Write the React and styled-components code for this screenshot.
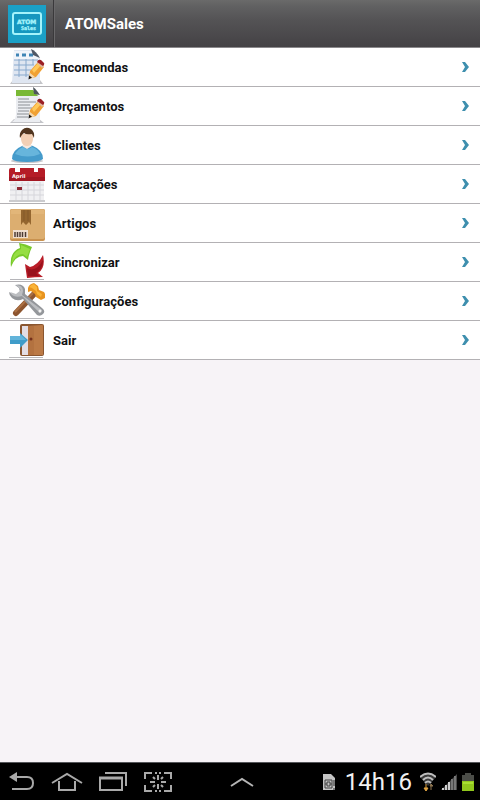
import React from 'react';
import styled, { createGlobalStyle } from 'styled-components';

const GlobalStyle = createGlobalStyle`
  * {
    box-sizing:border-box;
  }

  body {
    margin:0;
    background-color:#f7f3f7;
    font-family:Roboto, "Liberation Sans", sans-serif;
  }
`;

const Screen = styled.div`
  display:flex;
  flex-direction:column;
  min-height:100vh;
`;

const Header = styled.header`
  display:flex;
  align-items:stretch;
  height:48px;
  background:linear-gradient(#6a6a6a 0, #616162 6px, #545355 20px, #484649 40px, #444245 100%);
  border-bottom:1px solid #8b898c;

  h1 {
    margin:0;
    padding-left:11px;
    font-size:15px;
    line-height:48px;
    color:white;
  }
`;

const LogoButton = styled.button`
  display:flex;
  align-items:center;
  padding:0 7px 0 8px;
  border:0;
  border-right:1px solid #3a393b;
  box-shadow:1px 0 0 #69686a;
  background:none;
`;

const Menu = styled.ul`
  list-style-type:none;
  margin:0;
  padding:0;
  background-color:white;
`;

const MenuLink = styled.a`
  display:flex;
  align-items:center;
  height:39px;
  padding:0 10px 0 9px;
  border-bottom:1px solid #b3b1b4;
  color:#101012;
  font-size:13px;
  font-weight:bold;
  text-decoration:none;

  span {
    flex:1;
    padding-left:8px;
  }
`;

const NavBar = styled.footer`
  display:grid;
  grid-template-columns:1fr auto 1fr;
  align-items:center;
  height:38px;
  margin-top:auto;
  padding:0 6px 0 9px;
  border-top:1px solid #55565a;
  background-color:black;
`;

const NavKeys = styled.nav`
  display:flex;
  align-items:center;
  gap:16px;
`;

const NavButton = styled.button`
  display:flex;
  padding:0;
  border:0;
  background:none;
`;

const Status = styled.div`
  display:flex;
  align-items:center;
  justify-content:flex-end;
  gap:5px;

  time {
    padding:0 3px 0 4px;
    font-size:24px;
    line-height:36px;
    color:#f2f2f2;
  }
`;

const Logo = () => (
  <svg width="38" height="38" viewBox="0 0 38 38">
    <rect width="38" height="38" fill="#1ba0c6" />
    <rect x="5" y="8" width="28" height="21" rx="2" fill="#1697bf" stroke="#a4f3fb" strokeWidth="2" />
    <text x="9" y="19" fontFamily="DejaVu Sans" fontWeight="bold" fontSize="6" fill="#a4f3fb" stroke="#a4f3fb" strokeWidth="0.4">ATOM</text>
    <text x="13" y="25" fontFamily="DejaVu Sans Mono" fontWeight="bold" fontSize="5" fill="#a4f3fb" stroke="#a4f3fb" strokeWidth="0.3">Sales</text>
  </svg>
);

const Pencil = () => (
  <g>
    <path d="M20 31l1-8 8-9 6 5-8 10z" fill="#f0a032" />
    <path d="M23 22l7-8 3 2-8 9z" fill="#ffc95a" />
    <path d="M20 31l1-6 5 4z" fill="#f4d9b2" />
    <path d="M19.500 31.500l.5-4 3 2z" fill="#171514" />
    <path d="M28 15l2-2 5 5-2 2z" fill="#e0b9a0" />
    <path d="M28 14q1-3 4-2l2 2q2 1 1 3l-1 1z" fill="#9c2026" />
  </g>
);

const OrdersIcon = () => (
  <>
    <path d="M1 36h33l-3-4H4z" fill="#c3c4c8" />
    <path d="M5 2h19l7 9v24H3z" fill="#dfe6f1" />
    <path d="M5 3h17l8 8v1H5z" fill="#f1f4fa" />
    <path d="M7 7h3M13 7h4M20 7h4" stroke="#3f84b5" strokeWidth="3" />
    <path d="M5 12h24M5 17h20M5 22h17M5 27h15M10 11v18M17 11v18M24 11v6" fill="none" stroke="#88a9cd" strokeWidth="1" />
    <path d="M22 1q5 2 9 9l-7-3z" fill="#505866" />
    <Pencil />
  </>
);

const QuotesIcon = () => (
  <>
    <path d="M1 36h34l-5-4H5z" fill="#c3c4c8" />
    <path d="M7 3h18l6 7v25H3q4-3 4-8z" fill="#ebedf1" />
    <path d="M7 3h17l5 6H7z" fill="#79b835" />
    <path d="M9 12h11M9 15h18M9 18h12M9 21h14M9 24h11M8 27h12M8 30h11" stroke="#8b8f94" strokeWidth="1" />
    <path d="M24 0q3 2 7 8l-6-1z" fill="#4d555c" />
    <Pencil />
  </>
);

const ClientsIcon = () => (
  <>
    <ellipse cx="18" cy="35" rx="16" ry="2" fill="#c8c8cb" />
    <path d="M3 33q0-9 10-13l5-2 6 2q10 4 10 13-3 3-16 3T3 33z" fill="#459bcb" />
    <path d="M6 28q3-5 8-7 4 4 9 0 6 2 8 7-12 5-25 0z" fill="#67b5dc" />
    <path d="M13 20l2-3h6l2 3-5 3z" fill="#f7e9df" />
    <path d="M12 8h12q1 12-6 12T12 8z" fill="#f3d0b5" />
    <path d="M11 12q-1-5 2-8 4-4 9-1 4 3 3 9l-2-4q-6 1-8-1-2 1-4 5z" fill="#51351f" />
  </>
);

const CalendarIcon = () => (
  <>
    <path d="M0 35h36v2H0z" fill="#cbcbce" />
    <path d="M1 14h34v21H1z" fill="#f0f0f2" />
    <path d="M1 20h34M1 25h34M1 30h34M7 17v18M13 17v18M19 17v18M25 17v18M31 17v18" stroke="#d6d6db" strokeWidth="1" />
    <path d="M0 5q0-2 2-2h4v4h5V3h14v4h4V3h5q2 0 2 2v11H0z" fill="#b51c27" />
    <path d="M0 12h36v4H0z" fill="#a31722" />
    <rect x="8" y="22" width="5" height="3" fill="#8f2a35" />
    <text x="3" y="13" fontFamily="DejaVu Sans" fontWeight="bold" fontSize="5" fill="white">April</text>
  </>
);

const BoxIcon = () => (
  <>
    <rect x="1" y="5" width="35" height="32" rx="2" fill="#c9924f" />
    <rect x="1" y="5" width="35" height="30" rx="2" fill="#dcae70" />
    <path d="M2 6h33v4H2z" fill="#e2b679" />
    <path d="M12 6h10v15l-2-3-3 3-3-3-2 3z" fill="#94662f" />
    <path d="M15 6v11M19 6v11" stroke="#83582a" strokeWidth="1" />
    <rect x="4" y="26" width="15" height="8" fill="#f0dfd0" />
    <path d="M6 28v5M8.500 28v5M11 28v5M13.500 28v5M16.500 28v5" stroke="#4c3b35" strokeWidth="1.500" />
  </>
);

const SyncIcon = () => (
  <>
    <path d="M1 36h34v1H1z" fill="#b5b5b9" />
    <path d="M2 24Q0 9 11 5L10 0q7 1 13 4-3 6-4 13l-5-4Q6 13 2 24z" fill="#78c92b" />
    <path d="M3 20Q3 9 12 6V2l9 4-3 8-4-3Q7 11 3 20z" fill="#96de42" />
    <path d="M34 12q3 13-5 18l5 4q-8 0-16 1-1-7-2-14l5 3q8-2 13-12z" fill="#b91d28" />
    <path d="M34 17q0 9-7 13l3 3-11 0-1-8q9 5 16-8z" fill="#99121d" />
  </>
);

const ToolsIcon = () => (
  <>
    <path d="M1 36h34v1H1z" fill="#b9b9bc" />
    <path d="M7 31L26 11" stroke="#8d552f" strokeWidth="6" strokeLinecap="round" />
    <path d="M6 30L24 11" stroke="#ab7043" strokeWidth="2" />
    <path d="M19 6q1-4 6-5l4 3 1 4 5 2q2 3 1 6l-4 2-5-3-1-3-4-3-3 1z" fill="#e8941f" />
    <path d="M20 5q3-3 5-3l3 3 0 4 5 3-1 3-4-3-1-3-4-3z" fill="#fbb437" />
    <path d="M6 3q8-2 10 4l0 5 17 14q4 3 1 6-3 3-6 1L14 17q-6 3-11-1-3-3-3-6l6 4 5-4-1-4z" fill="#94979b" />
    <path d="M7 3q7 0 7 6l-1 4 20 15-2 3-18-17q-6 2-10-1l-2-3 6 2 5-4z" fill="#bcbec1" />
    <circle cx="31" cy="29" r="1.500" fill="#f4f4f4" />
  </>
);

const ExitIcon = () => (
  <>
    <path d="M0 36h34v1H0z" fill="#b9b9bc" />
    <rect x="11" y="3" width="24" height="32" rx="2" fill="#8a5630" />
    <path d="M13 5h7v29h-7z" fill="#e3dde3" />
    <path d="M19 5l14-1q1 0 1 1v29H19z" fill="#bb7a46" />
    <path d="M19 5h6v29h-6z" fill="#b37240" />
    <circle cx="22" cy="18" r="1.500" fill="#74301c" />
    <path d="M1 15h10v-3l8 7-8 8v-4H1z" fill="#3f9cc9" />
    <path d="M1 15h10v-2l6 6H1z" fill="#62b4da" />
  </>
);

const Chevron = () => (
  <svg width="9" height="12" viewBox="0 0 9 12">
    <path d="M1 1h3l4 5-4 5H1l3-5z" fill="#3e8fae" />
  </svg>
);

const BackIcon = () => (
  <svg width="26" height="20" viewBox="0 0 26 20">
    <path d="M6 5h12q6 0 6 6t-6 6H3" fill="none" stroke="#a9a9a9" strokeWidth="2" />
    <path d="M0 5l8-5v10z" fill="#a9a9a9" />
  </svg>
);

const HomeIcon = () => (
  <svg width="32" height="20" viewBox="0 0 32 20">
    <path d="M1 11L16 2l15 9M8 9v9h16V9" fill="none" stroke="#a9a9a9" strokeWidth="2" />
  </svg>
);

const RecentsIcon = () => (
  <svg width="29" height="20" viewBox="0 0 29 20">
    <path d="M6 1h21v13" fill="none" stroke="#a9a9a9" strokeWidth="2" />
    <path d="M1 6h22v12H1z" fill="none" stroke="#a9a9a9" strokeWidth="2" />
    <path d="M0 6h24" stroke="#a9a9a9" strokeWidth="3" />
  </svg>
);

const CaptureIcon = () => (
  <svg width="28" height="20" viewBox="0 0 28 20">
    <path d="M1 7V1h7M20 1h7v6M1 13v6h7M20 19h7v-6M11 1h2M15 1h2M11 19h2M15 19h2" fill="none" stroke="#a9a9a9" strokeWidth="2" />
    <path d="M14 3v5M14 12v5M6 10h5M17 10h5M9 5l2 2M19 5l-2 2M9 15l2-2M19 15l-2-2" stroke="#a9a9a9" strokeWidth="2" />
  </svg>
);

const CaretIcon = () => (
  <svg width="24" height="10" viewBox="0 0 24 10">
    <path d="M1 9l11-7 11 7" fill="none" stroke="#b5b5b5" strokeWidth="2" />
  </svg>
);

const SimIcon = () => (
  <svg width="14" height="18" viewBox="0 0 14 18">
    <path d="M1 1h8l4 4v12H1z" fill="#c4c4c4" />
    <path d="M3 7h7v8H3zM5 9h3v4H5zM3 11h2M8 11h2" fill="none" stroke="#404040" />
    <path d="M12 7v6M12 15v2" stroke="black" strokeWidth="2" />
    <path d="M12 7v6M12 15v2" stroke="#eee" />
  </svg>
);

const WifiIcon = () => (
  <svg width="16" height="20" viewBox="0 0 16 20">
    <path d="M0 5q8-8 16 0l-8 9z" fill="#393939" />
    <path d="M0 5q8-7 16 0M3 8q5-5 10 0M5 11q3-3 6 0" fill="none" stroke="#bdbdbd" strokeWidth="2" />
    <path d="M6 12v5M4 16l2 3 2-3z" stroke="#e0a443" fill="#e0a443" />
    <path d="M11 18v-5M10 14l1-2 2 2z" stroke="#8d7550" fill="#8d7550" />
  </svg>
);

const SignalIcon = () => (
  <svg width="16" height="16" viewBox="0 0 16 16">
    <path d="M0 16L16 0v16z" fill="#484848" />
    <path d="M2 16v-2M5 16v-5M8 16V8" stroke="#d0d0d0" strokeWidth="2" />
    <path d="M11 16V5M14 16V2" stroke="#777" strokeWidth="2" />
  </svg>
);

const BatteryIcon = () => (
  <svg width="12" height="18" viewBox="0 0 12 18">
    <path d="M3 0h6v2h3v16H0V2h3z" fill="#4b4d48" />
    <path d="M0 8h12v10H0z" fill="#91c71d" />
    <path d="M1 9h10v2H1z" fill="#a9df32" />
  </svg>
);

const items = [
  { label: 'Encomendas', Icon: OrdersIcon },
  { label: 'Orçamentos', Icon: QuotesIcon },
  { label: 'Clientes', Icon: ClientsIcon },
  { label: 'Marcações', Icon: CalendarIcon },
  { label: 'Artigos', Icon: BoxIcon },
  { label: 'Sincronizar', Icon: SyncIcon },
  { label: 'Configurações', Icon: ToolsIcon },
  { label: 'Sair', Icon: ExitIcon },
];

const App = () => (
  <Screen>
    <GlobalStyle />
    <Header>
      <LogoButton type="button" aria-label="ATOMSales"><Logo /></LogoButton>
      <h1>ATOMSales</h1>
    </Header>
    <Menu>
      {items.map(({ label, Icon }) => (
        <li key={label}>
          <MenuLink href="#">
            <svg width="36" height="38" viewBox="0 0 36 38"><Icon /></svg>
            <span>{label}</span>
            <Chevron />
          </MenuLink>
        </li>
      ))}
    </Menu>
    <NavBar>
      <NavKeys>
        <NavButton type="button" aria-label="Back"><BackIcon /></NavButton>
        <NavButton type="button" aria-label="Home"><HomeIcon /></NavButton>
        <NavButton type="button" aria-label="Recent apps"><RecentsIcon /></NavButton>
        <NavButton type="button" aria-label="Screen capture"><CaptureIcon /></NavButton>
      </NavKeys>
      <NavButton type="button" aria-label="Open tray"><CaretIcon /></NavButton>
      <Status>
        <SimIcon />
        <time dateTime="14:16">14h16</time>
        <WifiIcon />
        <SignalIcon />
        <BatteryIcon />
      </Status>
    </NavBar>
  </Screen>
);

export default App;
